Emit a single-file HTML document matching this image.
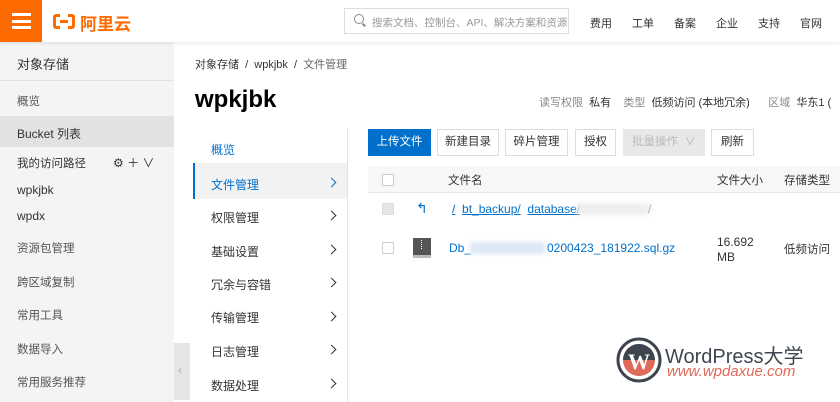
<!DOCTYPE html>
<html><head><meta charset="utf-8"><style>
*{margin:0;padding:0;box-sizing:border-box}
body{width:840px;height:402px;overflow:hidden;background:#fff;font-family:"Liberation Sans","Noto Sans CJK SC",sans-serif;font-size:12px;color:#333;position:relative}
.a{position:absolute;white-space:nowrap}
.hdr{left:0;top:0;width:840px;height:42px;background:#fff;box-shadow:0 1px 4px rgba(0,0,0,.1);z-index:2}
.side{left:0;top:42px;width:174px;height:360px;background:#f4f4f4}
.nav2 div{position:absolute;left:211px;font-size:12px;color:#333}
.chev{position:absolute;left:328px;width:7px;height:7px;border-right:1.2px solid #333;border-top:1.2px solid #333;transform:rotate(45deg)}
.btn{position:absolute;top:129px;height:27px;border:1px solid #ddd;background:#fff;font-size:11.5px;text-align:center;line-height:25px;color:#333}
.cb{position:absolute;width:12px;height:12px;border:1px solid #ccc;background:#fff}
.lnk{color:#0070cc;text-decoration:underline}
</style></head><body>
<div class="a hdr">
 <div class="a" style="left:0;top:0;width:42px;height:42px;background:#ff6a00">
  <div class="a" style="left:12px;top:13px;width:19px;height:3px;background:#fff"></div>
  <div class="a" style="left:12px;top:19.5px;width:19px;height:3px;background:#fff"></div>
  <div class="a" style="left:12px;top:26px;width:19px;height:3px;background:#fff"></div>
 </div>
 <div class="a" style="left:53px;top:14px;width:22px;height:15px;border:3px solid #ff6a00;border-radius:3px"></div>
 <div class="a" style="left:60px;top:12px;width:8px;height:19px;background:#fff"></div>
 <div class="a" style="left:60px;top:20px;width:8px;height:2.5px;background:#ff6a00"></div>
 <div class="a" style="left:80px;top:10px;font-size:17px;font-weight:bold;color:#ff6a00">阿里云</div>
 <div class="a" style="left:344px;top:8px;width:225px;height:26px;border:1px solid #ddd"></div>
 <div class="a" style="left:354px;top:14px;width:10px;height:10px;border:1.5px solid #888;border-radius:50%"></div>
 <div class="a" style="left:362px;top:24px;width:4px;height:1.5px;background:#888;transform:rotate(45deg)"></div>
 <div class="a" style="left:372px;top:15px;font-size:10.5px;color:#999">搜索文档、控制台、API、解决方案和资源</div>
 <div class="a" style="left:590px;top:15px;font-size:11px">费用</div>
 <div class="a" style="left:632px;top:15px;font-size:11px">工单</div>
 <div class="a" style="left:674px;top:15px;font-size:11px">备案</div>
 <div class="a" style="left:716px;top:15px;font-size:11px">企业</div>
 <div class="a" style="left:758px;top:15px;font-size:11px">支持</div>
 <div class="a" style="left:800px;top:15px;font-size:11px">官网</div>
</div>
<div class="a side"></div>
<div class="a" style="left:0;top:80px;width:174px;height:1px;background:#e2e2e2"></div>
<div class="a" style="left:17px;top:54px;font-size:13px">对象存储</div>
<div class="a" style="left:17px;top:93px;color:#555;font-size:11.5px">概览</div>
<div class="a" style="left:0;top:116px;width:174px;height:31px;background:#e2e2e2"></div>
<div class="a" style="left:17px;top:125px">Bucket 列表</div>
<div class="a" style="left:17px;top:155px;font-size:11.5px">我的访问路径</div>
<div class="a" style="left:113px;top:154px;font-size:12px">⚙ ＋ ∨</div>
<div class="a" style="left:17px;top:183px">wpkjbk</div>
<div class="a" style="left:17px;top:209px">wpdx</div>
<div class="a" style="left:17px;top:240px;color:#555;font-size:11.5px">资源包管理</div>
<div class="a" style="left:17px;top:274px;color:#555;font-size:11.5px">跨区域复制</div>
<div class="a" style="left:17px;top:307px;color:#555;font-size:11.5px">常用工具</div>
<div class="a" style="left:17px;top:341px;color:#555;font-size:11.5px">数据导入</div>
<div class="a" style="left:17px;top:374px;color:#555;font-size:11.5px">常用服务推荐</div>
<div class="a" style="left:174px;top:343px;width:16px;height:57px;background:#e6e6e6"></div>
<div class="a" style="left:178px;top:363px;color:#aaa">‹</div>

<div class="a" style="left:195px;top:56px;font-size:11px">对象存储 &nbsp;/&nbsp; wpkjbk &nbsp;/&nbsp; <span style="color:#666">文件管理</span></div>
<div class="a" style="left:195px;top:86px;font-size:24px;font-weight:bold;color:#000">wpkjbk</div>
<div class="a" style="left:539px;top:94px;font-size:11px;color:#888">读写权限 <span style="color:#333">&nbsp;私有</span> &nbsp;&nbsp; 类型 <span style="color:#333">&nbsp;低频访问 (本地冗余)</span> &nbsp;&nbsp;&nbsp;&nbsp; 区域 <span style="color:#333">&nbsp;华东1 (</span></div>

<div class="a" style="left:347px;top:128px;width:1px;height:274px;background:#e5e5e5"></div>
<div class="a" style="left:193px;top:163px;width:154px;height:36px;background:#f2f2f2"></div>
<div class="a" style="left:193px;top:163px;width:2px;height:36px;background:#0070cc"></div>
<div class="nav2">
<div style="top:141px;color:#0070cc">概览</div>
<div style="top:176px;color:#0070cc">文件管理</div>
<div style="top:209px">权限管理</div>
<div style="top:243px">基础设置</div>
<div style="top:276px">冗余与容错</div>
<div style="top:309px">传输管理</div>
<div style="top:343px">日志管理</div>
<div style="top:377px">数据处理</div>
</div>
<div class="chev" style="top:179px;border-color:#0070cc"></div>
<div class="chev" style="top:212px"></div>
<div class="chev" style="top:246px"></div>
<div class="chev" style="top:279px"></div>
<div class="chev" style="top:313px"></div>
<div class="chev" style="top:346px"></div>
<div class="chev" style="top:380px"></div>

<div class="btn" style="left:368px;width:63px;background:#0070cc;border-color:#0070cc;color:#fff">上传文件</div>
<div class="btn" style="left:437px;width:62px">新建目录</div>
<div class="btn" style="left:505px;width:63px">碎片管理</div>
<div class="btn" style="left:575px;width:41px">授权</div>
<div class="btn" style="left:623px;width:82px;background:#e8e8e8;border-color:#e8e8e8;color:#bbb">批量操作 &nbsp;∨</div>
<div class="btn" style="left:711px;width:43px">刷新</div>

<div class="a" style="left:368px;top:166px;width:472px;height:27px;background:#f7f7f7;border-bottom:1px solid #e8e8e8"></div>
<div class="cb" style="left:382px;top:174px"></div>
<div class="a" style="left:448px;top:172px;font-size:11.5px">文件名</div>
<div class="a" style="left:717px;top:172px;font-size:11.5px">文件大小</div>
<div class="a" style="left:784px;top:172px;font-size:11.5px">存储类型</div>

<div class="cb" style="left:382px;top:203px;background:#e6e6e6;border-color:#ddd"></div>
<div class="a" style="left:416px;top:200px;color:#0070cc;font-size:14px">↰</div>
<div class="a" style="left:452px;top:202px;font-size:12px"><span class="lnk">/</span>&nbsp; <span class="lnk">bt_backup/</span>&nbsp; <span class="lnk">database/</span></div>
<div class="a" style="left:577px;top:203px;width:72px;height:12px;background:#eee;filter:blur(2px)"></div>
<div class="a" style="left:648px;top:202px;color:#aaa">/</div>

<div class="cb" style="left:382px;top:242px"></div>
<div class="a" style="left:413px;top:238px;width:18px;height:20px;background:#555;border-bottom:3px solid #bbb"></div>
<div class="a" style="left:421px;top:240px;width:2px;height:9px;border-left:1px dotted #fff"></div>
<div class="a" style="left:449px;top:241px;color:#0070cc">Db_</div>
<div class="a" style="left:470px;top:242px;width:75px;height:12px;background:#dde8f5;filter:blur(2px)"></div>
<div class="a" style="left:547px;top:241px;color:#0070cc">0200423_181922.sql.gz</div>
<div class="a" style="left:717px;top:235px;line-height:15px">16.692<br>MB</div>
<div class="a" style="left:784px;top:241px;font-size:11.5px">低频访问</div>

<svg class="a" style="left:616px;top:337px" width="46" height="46" viewBox="0 0 46 46">
<circle cx="23" cy="23" r="21" fill="none" stroke="#3d4650" stroke-width="3"/>
<circle cx="23" cy="23" r="16" fill="#e06a5a"/>
<path d="M23 7a16 16 0 0 0-16 16h32A16 16 0 0 0 23 7z" fill="#3d4650"/>
<text x="23" y="32" text-anchor="middle" font-family="Liberation Serif" font-weight="bold" font-size="22" fill="#fff">W</text>
</svg>
<div class="a" style="left:665px;top:340px;font-size:20px;color:#3d4650">WordPress大学</div>
<div class="a" style="left:667px;top:363px;font-size:15px;font-style:italic;color:#e06a5a">www.wpdaxue.com</div>
</body></html>
